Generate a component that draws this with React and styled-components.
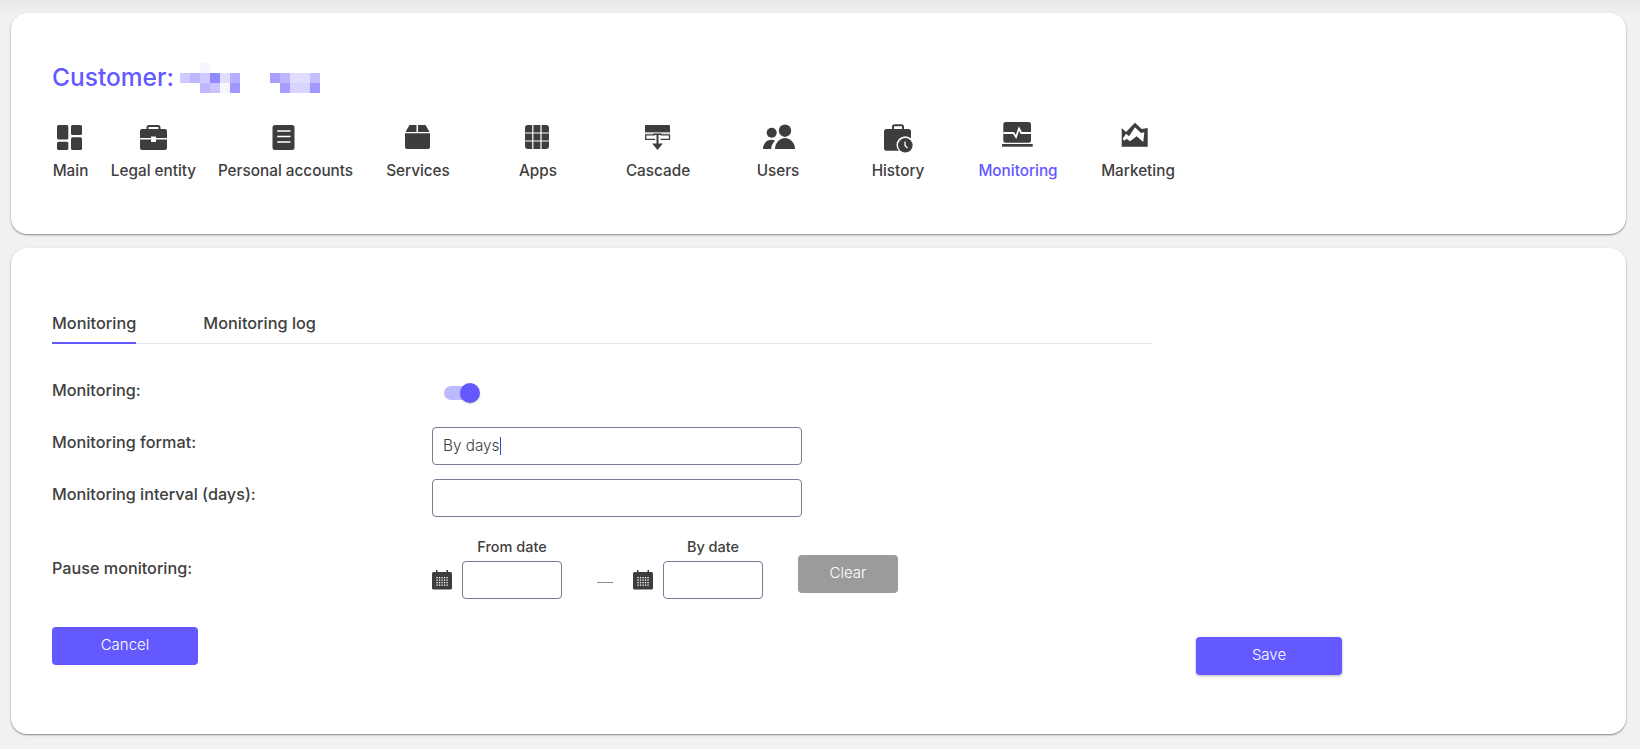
import React from "react";
import styled, { createGlobalStyle } from "styled-components";

const ACCENT = "#6359ff";
const INK = "#404040";

const GlobalStyle = createGlobalStyle`
  html, body {
    margin: 0;
    padding: 0;
    background: #f1f1f1;
  }
  * {
    box-sizing: border-box;
  }
`;

// pixelated customer name: [x, y, colour]
const BLUR_CELLS = [
  [20, 0, "#f7f6ff"],
  [0, 10, "#cfcaff"], [10, 10, "#bdb7ff"], [20, 10, "#cfcaff"], [30, 10, "#9088ff"], [40, 10, "#e0ddff"], [50, 10, "#b5afff"],
  [20, 20, "#bdb7ff"], [30, 20, "#cac5ff"], [40, 20, "#f7f6ff"], [50, 20, "#a198ff"],
  [90, 10, "#a79fff"], [100, 10, "#bdb7ff"], [110, 10, "#e0ddff"], [120, 10, "#e0ddff"], [130, 10, "#c5bfff"],
  [100, 20, "#a79fff"], [110, 20, "#d8d4ff"], [120, 20, "#d8d4ff"], [130, 20, "#a198ff"],
];

const NavSvg = ({ children }) => (
  <svg width="36" height="32" viewBox="0 0 36 32" fill="currentColor">
    {children}
  </svg>
);

const MainIcon = () => (
  <NavSvg>
    <rect x="4" y="3" width="11.300" height="14.500" rx="1.500" />
    <rect x="18" y="3" width="11" height="10" rx="1.500" />
    <rect x="4" y="19.700" width="11.300" height="8.300" rx="1.500" />
    <rect x="18" y="15.300" width="11" height="12.700" rx="1.500" />
  </NavSvg>
);

const LegalIcon = () => (
  <NavSvg>
    <path d="M11.500 8V5.500A1.500 1.500 0 0 1 13 4h9a1.500 1.500 0 0 1 1.500 1.500V8" fill="none" stroke="currentColor" strokeWidth="2" />
    <path d="M6 7h23a2 2 0 0 1 2 2v7H20v-1.500h-5V16H4V9a2 2 0 0 1 2-2z" />
    <path d="M4 17.500h11V20h5v-2.500h11V26a2 2 0 0 1-2 2H6a2 2 0 0 1-2-2z" />
  </NavSvg>
);

const AccountsIcon = () => (
  <NavSvg>
    <rect x="4.500" y="3" width="22" height="25" rx="2.500" />
    <path d="M9.200 9h13.300M9.200 14.500h13.300M9.200 20h13.300" stroke="#fff" strokeWidth="1.700" />
  </NavSvg>
);

const ServicesIcon = () => (
  <NavSvg>
    <path d="M9.500 3h7v7H5.500z" />
    <path d="M18 3h7.500l4 7H18z" />
    <path d="M5 11.200h25V25a2 2 0 0 1-2 2H7a2 2 0 0 1-2-2z" />
  </NavSvg>
);

const AppsIcon = () => (
  <NavSvg>
    <rect x="5" y="3" width="24" height="24" rx="3" />
    <path d="M12.800 3v24M21 3v24M5 11h24M5 19h24" stroke="#fff" strokeWidth="1.200" />
  </NavSvg>
);

const CascadeIcon = () => (
  <NavSvg>
    <path d="M6 3h23a1 1 0 0 1 1 1v6H5V4a1 1 0 0 1 1-1z" />
    <rect x="5" y="10" width="25" height="1.500" fill="#b5b5b5" />
    <path d="M15 12.800H5.700v4.500H15M20.500 12.800h9v4.500h-9" fill="none" stroke="currentColor" strokeWidth="1.300" />
    <path d="M13.500 11.500h8v1.400h-3v8.600h4.300L17.500 28l-5.300-6.500h4.300v-8.600h-3z" />
  </NavSvg>
);

const UsersIcon = () => (
  <NavSvg>
    <circle cx="11.700" cy="10.700" r="5" />
    <circle cx="25" cy="8.700" r="6.200" />
    <path d="M15 27c0-6 4.500-11 10-11s10 5 10 11z" />
    <path d="M3 27c0-5 3.500-9.300 8.300-9.300 1.500 0 2.700.4 3.700 1.100-2.200 2-3.700 5-3.900 8.200z" />
  </NavSvg>
);

const HistoryIcon = () => (
  <NavSvg>
    <path d="M13 8V4.800A1.500 1.500 0 0 1 14.500 3.300h7A1.500 1.500 0 0 1 23 4.800V8" fill="none" stroke="currentColor" strokeWidth="2" />
    <rect x="4" y="7" width="27" height="21.700" rx="2.500" />
    <circle cx="25.300" cy="23" r="8.800" fill="#fff" />
    <circle cx="25.300" cy="23.300" r="7.300" />
    <path d="M25 19.500v4l2.500 2.500" fill="none" stroke="#fff" strokeWidth="1.300" />
  </NavSvg>
);

const MonitoringIcon = () => (
  <NavSvg>
    <rect x="3.300" y="0" width="27.700" height="20.700" rx="2.500" />
    <rect x="2" y="22" width="30.700" height="2.700" />
    <path d="M3.300 11H13.500l2.500 4 3-8.500 2.300 4.500H31" fill="none" stroke="#fff" strokeWidth="1.800" />
  </NavSvg>
);

const MarketingIcon = () => (
  <NavSvg>
    <path d="M1.700 6L6 10 15 .7 21.700 7l6-1v18.700H1.700z" />
    <path d="M2.700 16.700L6 11.700l3 2.600 6-9 6 5.700 3.300-.7-1 9.700-6.600-5.700-6.700 5-3.300-2.600-2.400 2z" fill="#fff" />
  </NavSvg>
);

const CalendarIcon = () => {
  const dots = [];
  for (let row = 0; row < 4; row++) {
    for (let col = 0; col < 5; col++) {
      dots.push(<rect key={`${row}-${col}`} x={4.400 + col * 2.500} y={7 + row * 2.500} width="1.300" height="1.300" fill="#fff" />);
    }
  }
  return (
    <CalendarSvg width="20" height="20" viewBox="0 0 20 20">
      <rect x="0" y="2" width="20" height="17.500" rx="1.500" fill="#3d3d3d" />
      <rect x="4" y="0" width="1.500" height="4" fill="#3d3d3d" />
      <rect x="14.500" y="0" width="1.500" height="4" fill="#3d3d3d" />
      {dots}
    </CalendarSvg>
  );
};

const NAV_ITEMS = [
  { label: "Main", icon: MainIcon, width: 37 },
  { label: "Legal entity", icon: LegalIcon, width: 89 },
  { label: "Personal accounts", icon: AccountsIcon, width: 135, pull: true },
  { label: "Services", icon: ServicesIcon },
  { label: "Apps", icon: AppsIcon },
  { label: "Cascade", icon: CascadeIcon },
  { label: "Users", icon: UsersIcon },
  { label: "History", icon: HistoryIcon },
  { label: "Monitoring", icon: MonitoringIcon, active: true },
  { label: "Marketing", icon: MarketingIcon },
];

const App = () => {
  return (
    <Page>
      <GlobalStyle />
      <HeaderCard>
        <TitleRow>
          <Title>Customer:</Title>
          <BlurMark width="140" height="30" viewBox="0 0 140 30">
            {BLUR_CELLS.map(([x, y, fill]) => (
              <rect key={`${x}-${y}`} x={x} y={y} width="10" height="10" fill={fill} />
            ))}
          </BlurMark>
        </TitleRow>
        <Nav>
          {NAV_ITEMS.map(({ label, icon: Icon, width, pull, active }) => (
            <NavItem key={label} $width={width} $pull={pull} $active={active}>
              <Icon />
              <NavLabel>{label}</NavLabel>
            </NavItem>
          ))}
        </Nav>
      </HeaderCard>

      <ContentCard>
        <Tabs>
          <Tab $active>Monitoring</Tab>
          <Tab>Monitoring log</Tab>
        </Tabs>

        <Form>
          <Row>
            <RowLabel>Monitoring:</RowLabel>
            <Toggle>
              <ToggleThumb />
            </Toggle>
          </Row>
          <Row>
            <RowLabel>Monitoring format:</RowLabel>
            <FieldBox>
              By days
              <Caret />
            </FieldBox>
          </Row>
          <Row>
            <RowLabel>Monitoring interval (days):</RowLabel>
            <WideInput />
          </Row>
          <DateRow>
            <PauseLabel>Pause monitoring:</PauseLabel>
            <DateGroup>
              <DateField>
                <DateCaption>From date</DateCaption>
                <CalendarIcon />
                <DateInput />
              </DateField>
              <Dash />
              <DateField>
                <DateCaption>By date</DateCaption>
                <CalendarIcon />
                <DateInput />
              </DateField>
              <ClearButton>Clear</ClearButton>
            </DateGroup>
          </DateRow>
        </Form>

        <Footer>
          <PrimaryButton>Cancel</PrimaryButton>
          <SaveButton>Save</SaveButton>
        </Footer>
      </ContentCard>
    </Page>
  );
};

export default App;

const Page = styled.div`
  height: 749px;
  padding: 13px 14px 15px 11px;
  display: flex;
  flex-direction: column;
  gap: 14px;
  overflow: hidden;
  color: ${INK};
  font-family: "Inter", "Liberation Sans", sans-serif;
  background: linear-gradient(#e7e7e7, #f1f1f1 14px);
`;

const Card = styled.section`
  background: #fff;
  border-radius: 16px;
  box-shadow: 0 1px 2px rgba(0, 0, 0, 0.45);
  padding-left: 41px;
`;

const HeaderCard = styled(Card)`
  height: 221px;
  padding-top: 49px;
`;

const TitleRow = styled.div`
  display: flex;
  align-items: flex-start;
  gap: 6px;
  height: 60px;
`;

const Title = styled.h1`
  margin: 0;
  width: 122px;
  font-size: 24.500px;
  line-height: 30px;
  font-weight: 500;
  white-space: nowrap;
  color: ${ACCENT};
`;

const BlurMark = styled.svg`
  margin-top: 1px;
`;

const Nav = styled.nav`
  display: flex;
  gap: 20px;
`;

const NavItem = styled.a`
  display: flex;
  flex-direction: column;
  align-items: center;
  flex: none;
  width: ${(p) => p.$width || 100}px;
  margin-right: ${(p) => (p.$pull ? -5 : 0)}px;
  color: ${(p) => (p.$active ? ACCENT : INK)};

  svg {
    color: #3d3d3d;
  }
`;

const NavLabel = styled.span`
  margin-top: 7px;
  font-size: 15.300px;
  line-height: 20px;
  font-weight: 500;
  white-space: nowrap;
`;

const ContentCard = styled(Card)`
  padding-top: 65px;
  padding-bottom: 59px;
`;

const Tabs = styled.div`
  display: flex;
  gap: 67px;
  width: 1100px;
  height: 31px;
  border-bottom: 1px solid #e4e4ea;
`;

const Tab = styled.div`
  height: 31px;
  font-size: 16.300px;
  line-height: 20px;
  font-weight: 500;
  border-bottom: 2px solid ${(p) => (p.$active ? ACCENT : "transparent")};
`;

const Form = styled.form`
  display: flex;
  flex-direction: column;
  gap: 14px;
  padding-top: 31px;
`;

const Row = styled.div`
  display: grid;
  grid-template-columns: 380px 370px;
  align-items: start;
  height: 38px;
`;

const RowLabel = styled.label`
  padding-top: 5px;
  font-size: 16.200px;
  line-height: 20px;
  font-weight: 500;
  white-space: nowrap;
`;

const Toggle = styled.div`
  position: relative;
  width: 28px;
  height: 14px;
  margin: 11px 0 0 12px;
  border-radius: 7px;
  background: #bdb9fd;
`;

const ToggleThumb = styled.span`
  position: absolute;
  top: -3px;
  right: -8px;
  width: 20px;
  height: 20px;
  border-radius: 50%;
  background: ${ACCENT};
  box-shadow: 0 1px 2px rgba(0, 0, 0, 0.2);
`;

const FieldBox = styled.div`
  display: flex;
  align-items: center;
  height: 38px;
  padding: 0 10px 2px;
  border: 1px solid #7a7a90;
  border-radius: 4px;
  font-size: 15.300px;
  font-weight: 300;
  background: #fff;
`;

const Caret = styled.span`
  width: 1px;
  height: 18px;
  margin-top: 2px;
  background: #3b4cc0;
`;

const WideInput = styled.input`
  width: 370px;
  height: 38px;
  border: 1px solid #7a7a90;
  border-radius: 4px;
  background: #fff;
`;

const DateRow = styled.div`
  display: grid;
  grid-template-columns: 380px 1fr;
  margin-top: 7px;
`;

const PauseLabel = styled(RowLabel)`
  padding-top: 20px;
`;

const DateGroup = styled.div`
  display: flex;
  align-items: flex-start;
`;

const DateField = styled.div`
  display: grid;
  grid-template-columns: 20px 100px;
  column-gap: 10px;
  row-gap: 5px;
  align-items: center;
`;

const DateCaption = styled.div`
  grid-column: 2;
  font-size: 14.500px;
  line-height: 18px;
  font-weight: 500;
  text-align: center;
  white-space: nowrap;
`;

const CalendarSvg = styled.svg`
  display: block;
  grid-column: 1;
`;

const DateInput = styled.input`
  width: 100px;
  height: 38px;
  border: 1px solid #7a7a90;
  border-radius: 4px;
  background: #fff;
`;

const Dash = styled.div`
  width: 16px;
  height: 1px;
  margin: 44px 20px 0 35px;
  background: #8a8a8a;
`;

const BaseButton = styled.button`
  width: 146px;
  height: 38px;
  padding: 0 0 3px;
  border: none;
  border-radius: 4px;
  color: #fff;
  font-family: inherit;
  font-size: 15px;
  font-weight: 300;
`;

const ClearButton = styled(BaseButton)`
  width: 100px;
  margin: 17px 0 0 35px;
  background: #9b9b9b;
`;

const PrimaryButton = styled(BaseButton)`
  background: ${ACCENT};
`;

const SaveButton = styled(PrimaryButton)`
  margin-top: 10px;
  box-shadow: 0 1px 3px rgba(0, 0, 0, 0.3);
`;

const Footer = styled.div`
  display: flex;
  justify-content: space-between;
  align-items: flex-start;
  width: 1290px;
  margin-top: 28px;
`;
